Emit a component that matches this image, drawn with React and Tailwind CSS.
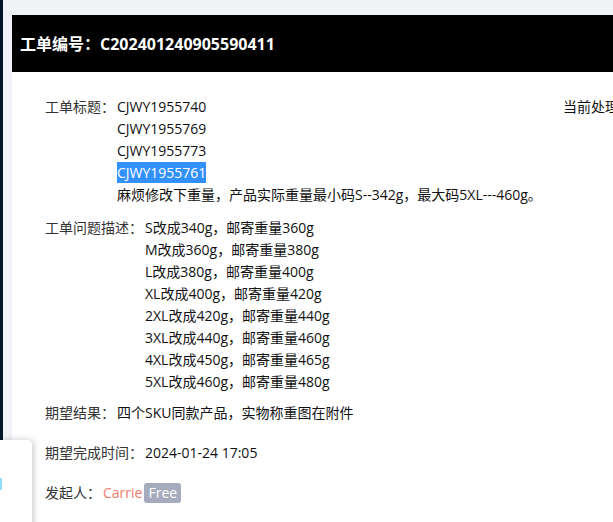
import React from 'react';

const sizes = [
  'S改成340g，邮寄重量360g',
  'M改成360g，邮寄重量380g',
  'L改成380g，邮寄重量400g',
  'XL改成400g，邮寄重量420g',
  '2XL改成420g，邮寄重量440g',
  '3XL改成440g，邮寄重量460g',
  '4XL改成450g，邮寄重量465g',
  '5XL改成460g，邮寄重量480g',
];

function Row({ label, children, className = '' }) {
  return (
    <div className={'flex ' + className}>
      <div className="shrink-0 text-[#333] mr-[2px]">{label}</div>
      <div className="text-[#111]">{children}</div>
    </div>
  );
}

export default function App() {
  return (
    <div className="relative w-[613px] h-[522px] overflow-hidden flex bg-[#f0f2f5] font-['Open_Sans','Noto_Sans_CJK_SC',sans-serif]">
      <div className="w-[3px] shrink-0 bg-[#001529]" />
      <div className="flex-1 min-w-0 pl-[9px] pt-[15px] flex flex-col">
        <div className="h-[57px] shrink-0 bg-black flex items-center pl-[8px] text-white font-bold text-[16px] whitespace-nowrap">
          工单编号：C202401240905590411
        </div>
        <div className="flex-1 bg-white pt-[24px] pl-[33px] text-[14px] leading-[22px] flex">
          <div className="w-[518px] shrink-0">
            <Row label="工单标题：">
              <div>CJWY1955740</div>
              <div>CJWY1955769</div>
              <div>CJWY1955773</div>
              <div><span className="bg-[#3390ff] text-white py-[1px]">CJWY1955761</span></div>
              <div className="whitespace-nowrap">麻烦修改下重量，产品实际重量最小码S--342g，最大码5XL---460g。</div>
            </Row>
            <Row label="工单问题描述：" className="mt-[11px]">
              {sizes.map((s) => (
                <div key={s} className="whitespace-nowrap">{s}</div>
              ))}
            </Row>
            <Row label="期望结果：" className="mt-[9px]">
              四个SKU同款产品，实物称重图在附件
            </Row>
            <Row label="期望完成时间：" className="mt-[18px]">
              2024-01-24 17:05
            </Row>
            <Row label="发起人：" className="mt-[18px]">
              <span className="text-[#f07c6c]">Carrie</span>
              <span className="ml-[2px] inline-block px-[4px] rounded-[3px] bg-[#a3abbd] text-white leading-[20px]">Free</span>
            </Row>
          </div>
          <div className="whitespace-nowrap text-[#111]">当前处理人：</div>
        </div>
      </div>
      <div className="absolute left-0 top-[440px] w-[32px] h-[90px] bg-white rounded-tr-[5px] shadow-[2px_0_6px_rgba(0,0,0,0.2)]">
        <div className="absolute left-0 top-[38px] w-[2px] h-[12px] bg-[#8fdcff]" />
      </div>
    </div>
  );
}
